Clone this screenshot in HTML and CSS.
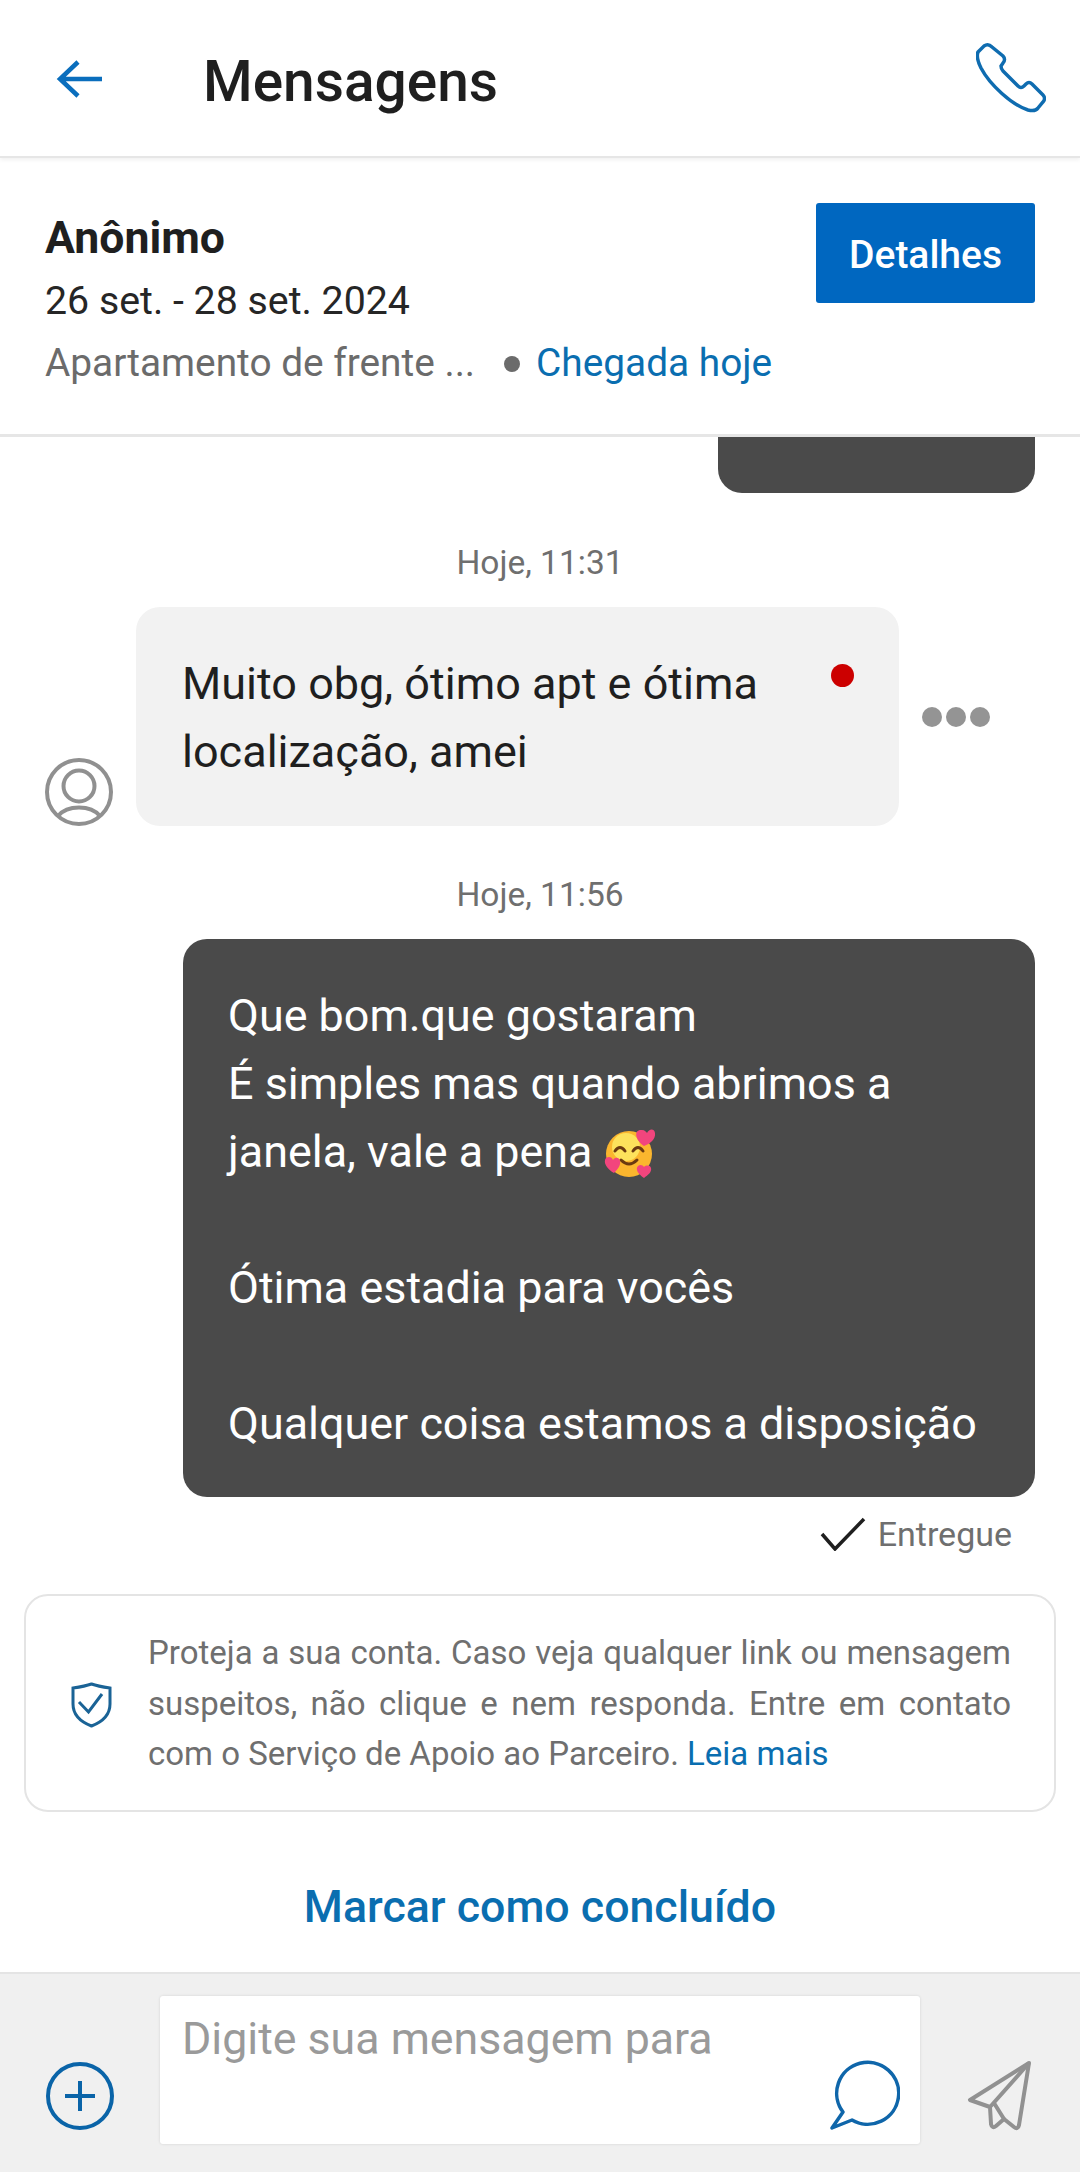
FILE: index.html
```html
<!DOCTYPE html>
<html lang="pt">
<head>
	<meta name="viewport" content="width=device-width, initial-scale=1.0">
	<title>Mensagens</title>
	<link rel="stylesheet" href="styles.css">
</head>
<body>

	<div id="app">

		<div class="topbar">
			<svg class="back-icon" viewBox="0 0 48 40"><path d="M22 3 L4 20 L22 37 M4 20 H46"/></svg>
			<h1 class="topbar-title">Mensagens</h1>
			<svg class="phone-icon" viewBox="0 0 70 70"><path d="M8 3 C11 1 14 2 16 4 L27 13 C29 15 29 18 27 20 L25 23 C25 25 26 27 27 28 L42 43 C44 45 46 45 48 43 L50 41 C52 39 54 39 56 41 L67 52 C69 54 69 57 67 59 L62 65 C60 68 56 68 52 67 C36 62 14 42 5 25 C2 19 0 14 2 9 Z"/></svg>
		</div>

		<div class="trip">
			<div class="trip-info">
				<div class="trip-name">Anônimo</div>
				<div class="trip-dates">26 set. - 28 set. 2024</div>
				<div class="trip-place">
					<span>Apartamento de frente ...</span>
					<span class="dot"></span>
					<span class="arrival">Chegada hoje</span>
				</div>
			</div>
			<button class="details">Detalhes</button>
		</div>

		<div class="thread">
			<div class="bubble-end"></div>

			<div class="stamp stamp-first">Hoje, 11:31</div>
			<div class="incoming">
				<svg class="avatar" viewBox="0 0 68 68">
					<circle cx="34" cy="34" r="32"/>
					<circle cx="34" cy="28" r="15.5"/>
					<path d="M13 58 C18 52 26 49.5 34 49.5 C42 49.5 50 52 55 58"/>
				</svg>
				<div class="bubble-in">
					<span class="unread"></span>
					Muito obg, ótimo apt e ótima<br>localização, amei
				</div>
				<div class="more"><span></span><span></span><span></span></div>
			</div>

			<div class="stamp stamp-second">Hoje, 11:56</div>
			<div class="bubble-out">
				Que bom.que gostaram<br>
				É simples mas quando abrimos a<br>
				janela, vale a pena
				<svg class="emoji" viewBox="0 0 52 52">
					<circle cx="25" cy="27" r="23" fill="#fbb62e"/>
					<circle cx="22" cy="20" r="14" fill="#fde25c"/>
					<path class="face" d="M11 24 Q16 17 21 24 M29 24 Q34 17 39 24"/>
					<path class="face" d="M17 33 Q25 41 33 33"/>
					<path class="heart" d="M40 19 C30 12 30 2 38 3 C41 3 42 5 43 6 C45 2 50 1 51 6 C52 12 46 17 40 19 Z"/>
					<path class="heart" d="M10 46 C2 41 -1 35 2 31 C5 29 8 30 9 33 C11 30 15 30 16 34 C17 39 13 43 10 46 Z"/>
					<path class="heart" d="M40 51 C34 47 31 42 34 39 C36 37 39 38 40 40 C42 38 46 38 47 41 C48 45 44 48 40 51 Z"/>
				</svg><br>
				<br>
				Ótima estadia para vocês<br>
				<br>
				Qualquer coisa estamos a disposição
			</div>

			<div class="delivered">
				<svg class="check" viewBox="0 0 46 34"><path d="M2 17 L15 32 L44 2"/></svg>
				<span>Entregue</span>
			</div>

			<div class="notice">
				<svg class="shield" viewBox="0 0 41 46">
					<path d="M2 6 C9 5 15 4 20.5 2 C26 4 32 5 39 6 V22 C39 33 31 40 20.5 44 C10 40 2 33 2 22 Z"/>
					<path d="M8 20 L17.5 30 L31 12"/>
				</svg>
				<p class="notice-text">Proteja a sua conta. Caso veja qualquer link ou mensagem suspeitos, não clique e nem responda. Entre em contato com o Serviço de Apoio ao Parceiro. <a class="read-more">Leia mais</a></p>
			</div>

			<div class="finish">Marcar como concluído</div>
		</div>

		<div class="composer">
			<svg class="plus-icon" viewBox="0 0 68 68">
				<circle cx="34" cy="34" r="32"/>
				<path d="M34 19 V49 M19 34 H49"/>
			</svg>
			<div class="field">
				<div class="placeholder">Digite sua mensagem para</div>
				<svg class="chat-icon" viewBox="0 0 70 72">
					<path d="M2 68 L13 52 A31 31 0 1 1 22 60 Z"/>
				</svg>
			</div>
			<svg class="send-icon" viewBox="0 0 68 74">
				<path d="M62 3 L3 40 L23 47 L24 64 Q25 69 29 66 L37 59 L47 67 Q51 70 52 65 Z"/>
				<path d="M62 3 L23 47 M27 43 L37 59"/>
			</svg>
		</div>

	</div>

</body>
</html>
```

FILE: styles.css
```css
* {
	box-sizing: border-box;
}

body {
	margin: 0;
	background: #fff;
	font-family: Roboto, "Liberation Sans", sans-serif;
}

#app {
	width: 1080px;
	height: 2172px;
	display: flex;
	flex-direction: column;
	overflow: hidden;
}

/* top bar */
.topbar {
	height: 158px;
	flex: none;
	display: flex;
	align-items: center;
	padding: 0 34px 0 56px;
	border-bottom: 2px solid #e6e6e6;
	box-shadow: 0 2px 4px rgba(0, 0, 0, 0.06);
	position: relative;
}

.back-icon {
	width: 48px;
	height: 40px;
	margin-top: 2px;
	fill: none;
	stroke: #0a6ebd;
	stroke-width: 4.5;
}

.topbar-title {
	margin: 6px 0 0 99px;
	flex: 1;
	font-size: 56.8px;
	font-weight: 500;
	color: #1f1f1f;
}

.phone-icon {
	width: 70px;
	height: 70px;
	fill: none;
	stroke: #0f6cb0;
	stroke-width: 3.5;
}

/* booking summary */
.trip {
	height: 279px;
	flex: none;
	display: flex;
	justify-content: space-between;
	align-items: flex-start;
	padding: 45px 45px 0;
	border-bottom: 3px solid #e6e6e6;
}

.trip-info {
	padding-top: 14px;
}

.trip-name {
	font-size: 44.6px;
	font-weight: 700;
	line-height: 42px;
	color: #1f1f1f;
}

.trip-dates {
	margin-top: 21px;
	font-size: 39.3px;
	line-height: 42px;
	color: #262626;
}

.trip-place {
	margin-top: 20px;
	font-size: 38.8px;
	line-height: 42px;
	color: #6b6b6b;
	display: flex;
	align-items: center;
}

.dot {
	width: 16px;
	height: 16px;
	margin: 2px 16px 0 29px;
	border-radius: 50%;
	background: #6b6b6b;
}

.arrival {
	color: #0a6eb0;
}

.details {
	width: 219px;
	height: 100px;
	padding-top: 4px;
	border: 0;
	border-radius: 3px;
	background: #0067c0;
	color: #fff;
	font-family: inherit;
	font-size: 39px;
	font-weight: 500;
}

/* messages */
.thread {
	flex: 1;
	display: flex;
	flex-direction: column;
	min-height: 0;
}

.bubble-end {
	width: 317px;
	height: 56px;
	align-self: flex-end;
	margin-right: 45px;
	background: #4a4a4a;
	border-radius: 0 0 24px 24px;
}

.stamp {
	text-align: center;
	font-size: 33.5px;
	line-height: 36px;
	color: #6f6f6f;
}

.stamp-first {
	margin-top: 52px;
}

.stamp-second {
	margin-top: 51px;
}

.incoming {
	margin-top: 26px;
	padding-left: 45px;
	display: flex;
	align-items: flex-end;
}

.avatar {
	width: 68px;
	height: 68px;
	flex: none;
	fill: none;
	stroke: #909090;
	stroke-width: 4;
}

.bubble-in {
	position: relative;
	width: 763px;
	height: 219px;
	margin-left: 23px;
	padding: 43px 46px 0;
	background: #f2f2f2;
	border-radius: 24px;
	font-size: 45px;
	line-height: 68px;
	color: #1f1f1f;
}

.unread {
	position: absolute;
	top: 57px;
	right: 45px;
	width: 23px;
	height: 23px;
	border-radius: 50%;
	background: #cc0000;
}

.more {
	display: flex;
	gap: 4px;
	margin: 0 0 99px 23px;
}

.more span {
	width: 20px;
	height: 20px;
	border-radius: 50%;
	background: #949494;
}

.bubble-out {
	width: 852px;
	height: 558px;
	margin-top: 26px;
	margin-left: 183px;
	padding: 43px 45px 0;
	background: #4a4a4a;
	border-radius: 24px;
	font-size: 44.9px;
	line-height: 68px;
	color: #fff;
}

.emoji {
	width: 52px;
	height: 52px;
	vertical-align: -12px;
}

.emoji .face {
	fill: none;
	stroke: #6b3a10;
	stroke-width: 3;
	stroke-linecap: round;
}

.emoji .heart {
	fill: #f2457d;
}

.delivered {
	height: 56px;
	margin-top: 9px;
	padding-right: 68px;
	display: flex;
	justify-content: flex-end;
	align-items: center;
	font-size: 34px;
	color: #6f6f6f;
}

.check {
	width: 46px;
	height: 34px;
	margin-right: 12px;
	fill: none;
	stroke: #1f1f1f;
	stroke-width: 3.5;
}

.notice {
	height: 218px;
	margin: 32px 24px 0;
	padding: 32px 43px 0 45px;
	border: 2px solid #e4e4e4;
	border-radius: 24px;
	display: flex;
	align-items: flex-start;
}

.shield {
	width: 41px;
	height: 46px;
	flex: none;
	margin: 54px 36px 0 0;
	fill: none;
	stroke: #1a6396;
	stroke-width: 3;
}

.notice-text {
	margin: 0;
	font-size: 33px;
	line-height: 50.5px;
	color: #6f6f6f;
	text-align: justify;
}

.read-more {
	color: #0a6eb0;
}

.finish {
	margin-top: 70px;
	text-align: center;
	font-size: 44.7px;
	font-weight: 500;
	line-height: 50px;
	color: #0a6eb0;
}

/* message box */
.composer {
	height: 200px;
	flex: none;
	display: flex;
	align-items: flex-start;
	padding: 22px 46px 0;
	background: #f0f0f0;
	border-top: 2px solid #e4e4e4;
}

.plus-icon {
	width: 68px;
	height: 68px;
	flex: none;
	margin-top: 66px;
	fill: none;
	stroke: #0a64a8;
	stroke-width: 4;
}

.field {
	position: relative;
	width: 760px;
	height: 148px;
	flex: none;
	margin-left: 46px;
	padding: 21px 22px 0;
	background: #fff;
	border-radius: 3px;
	box-shadow: 0 0 3px rgba(0, 0, 0, 0.12);
}

.placeholder {
	font-size: 44.7px;
	line-height: 44px;
	color: #9a9a9a;
}

.chat-icon {
	position: absolute;
	right: 20px;
	bottom: 12px;
	width: 70px;
	height: 72px;
	fill: none;
	stroke: #0f66aa;
	stroke-width: 3.5;
	stroke-linejoin: round;
}

.send-icon {
	width: 68px;
	height: 74px;
	flex: none;
	margin: 64px 0 0 47px;
	fill: none;
	stroke: #919191;
	stroke-width: 4;
	stroke-linejoin: round;
}
```
